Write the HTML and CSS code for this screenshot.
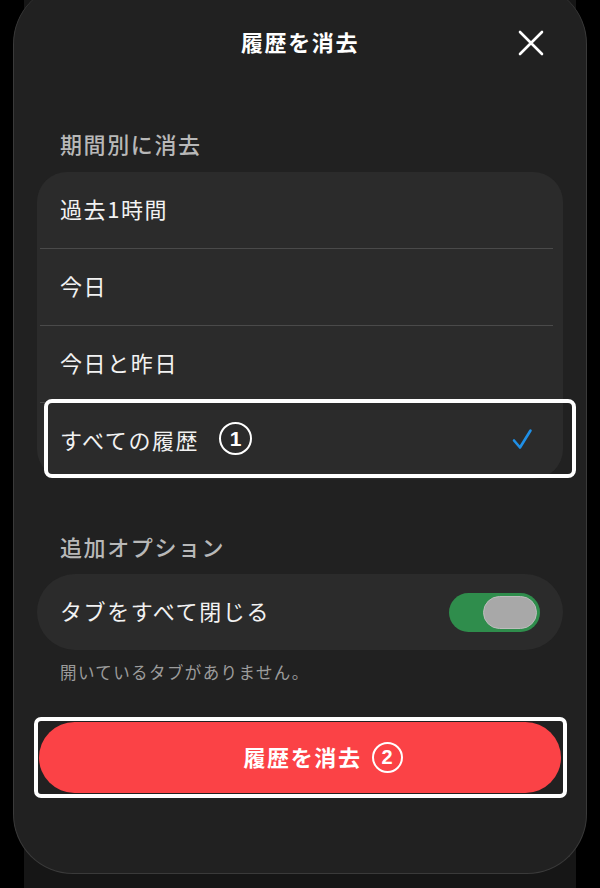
FILE: index.html
```html
<!DOCTYPE html>
<html lang="ja">
<head>
  <meta charset="UTF-8">
  <title>履歴を消去</title>
  <link rel="stylesheet" href="styles.css">
</head>
<body>
  <div class="sheet">
    <header class="sheet-header">
      <h1 class="sheet-title">履歴を消去</h1>
      <button class="close-btn" aria-label="閉じる">
        <svg width="26" height="26" viewBox="0 0 26 26">
          <path d="M2 2 L24 24 M24 2 L2 24" stroke="#fff" stroke-width="2.6" stroke-linecap="round" fill="none"/>
        </svg>
      </button>
    </header>

    <h2 class="section-label">期間別に消去</h2>
    <ul class="option-list">
      <li class="option">過去1時間</li>
      <li class="option">今日</li>
      <li class="option">今日と昨日</li>
      <li class="option option-selected mark-row">
        <span class="option-text">すべての履歴</span>
        <span class="step">1</span>
        <svg class="check" width="22" height="24" viewBox="0 0 22 24">
          <path d="M3 13.5 L9 20.5 L19.5 3.5" stroke="#1f8fe6" stroke-width="2.6" stroke-linecap="round" stroke-linejoin="round" fill="none"/>
        </svg>
      </li>
    </ul>

    <h2 class="section-label section-label-extra">追加オプション</h2>
    <div class="toggle-card">
      <span class="option-text">タブをすべて閉じる</span>
      <span class="switch"><span class="knob"></span></span>
    </div>
    <p class="note">開いているタブがありません。</p>

    <button class="danger-btn mark-btn">
      履歴を消去<span class="step step-small">2</span>
    </button>
  </div>
</body>
</html>
```

FILE: styles.css
```css
* {
  box-sizing: border-box;
}

html,
body {
  margin: 0;
  padding: 0;
}

body {
  width: 600px;
  height: 888px;
  overflow: hidden;
  font-family: "Noto Sans CJK JP", "Noto Sans", sans-serif;
  color: #fff;
  background: linear-gradient(to right, #000 24px, #161616 24px, #161616 576px, #000 576px);
}

.sheet {
  margin: -16px 13px 0;
  height: 890px;
  padding-top: 30px;
  background: #212121;
  border: 1px solid #3a3a3a;
  border-top: none;
  border-radius: 60px;
  display: flex;
  flex-direction: column;
}

.sheet-header {
  height: 54px;
  display: grid;
  grid-template-columns: 1fr auto 1fr;
  align-items: center;
  padding: 0 42px;
}

.sheet-title {
  grid-column: 2;
  margin: 0;
  font-size: 22px;
  font-weight: 700;
  letter-spacing: 1.6px;
}

.close-btn {
  grid-column: 3;
  justify-self: end;
  width: 26px;
  height: 26px;
  padding: 0;
  margin-top: 4px;
  border: none;
  background: none;
  display: flex;
}

.section-label {
  margin: 61px 0 15px 46px;
  height: 28px;
  line-height: 28px;
  font-size: 22px;
  font-weight: 500;
  letter-spacing: 1.6px;
  color: #b8b8b8;
}

.section-label-extra {
  margin-top: 53px;
  margin-bottom: 14px;
}

.option-list {
  list-style: none;
  margin: 0 23px;
  padding: 0;
  background: #2b2b2b;
  border-radius: 30px;
}

.option {
  height: 77px;
  padding: 0 30px 5px 23px;
  display: flex;
  align-items: center;
  font-size: 22px;
  letter-spacing: 1.6px;
  color: #f2f2f2;
  border-bottom: 1px solid #4a4a4a;
  border-image: linear-gradient(to right, transparent 4px, #4a4a4a 4px, #4a4a4a calc(100% - 11px), transparent calc(100% - 11px)) 1;
}

.option-selected {
  border-bottom: none;
  height: 76px;
}

.option-text {
  flex: none;
}

.step {
  width: 33px;
  height: 33px;
  margin-left: 20px;
  border: 2.5px solid #fff;
  border-radius: 50%;
  display: inline-flex;
  align-items: center;
  justify-content: center;
  font-family: "Liberation Sans", sans-serif;
  font-size: 21px;
  font-weight: 700;
  letter-spacing: 0;
  color: #fff;
}

.check {
  margin-left: auto;
}

.mark-row,
.mark-btn {
  position: relative;
}

.mark-row::after {
  content: "";
  position: absolute;
  top: -4px;
  bottom: 1px;
  left: 7px;
  right: -13px;
  border: 4px solid #fff;
  border-radius: 8px;
}

.toggle-card {
  margin: 0 23px;
  height: 76px;
  padding: 0 23px;
  background: #2b2b2b;
  border-radius: 38px;
  display: flex;
  align-items: center;
  justify-content: space-between;
  font-size: 22px;
  letter-spacing: 1.6px;
  color: #f2f2f2;
}

.toggle-card .option-text {
  margin-bottom: 4px;
}

.switch {
  width: 91px;
  height: 39px;
  padding: 3px;
  border-radius: 20px;
  background: #2f8d4c;
  display: flex;
  justify-content: flex-end;
}

.knob {
  width: 54px;
  height: 33px;
  border-radius: 17px;
  background: #a8a8a8;
  border: 1px solid #bdbdbd;
}

.note {
  margin: 10px 0 0 46px;
  height: 24px;
  line-height: 24px;
  font-size: 16.5px;
  letter-spacing: 1.4px;
  color: #9c9c9c;
}

.danger-btn {
  margin: 38px 25px 0;
  height: 71px;
  border: none;
  border-radius: 36px;
  background: #fb4246;
  color: #fff;
  font-family: inherit;
  font-size: 22px;
  font-weight: 700;
  letter-spacing: 1.6px;
  display: flex;
  align-items: center;
  justify-content: center;
  padding: 0 0 3px 46px;
}

.step-small {
  width: 31px;
  height: 31px;
  margin-left: 10px;
  margin-top: 3px;
  border-width: 2px;
  font-size: 20px;
}

.mark-btn::after {
  content: "";
  position: absolute;
  top: -5px;
  bottom: -5px;
  left: -5px;
  right: -6px;
  border: 4px solid #fff;
  border-radius: 7px;
}
```
